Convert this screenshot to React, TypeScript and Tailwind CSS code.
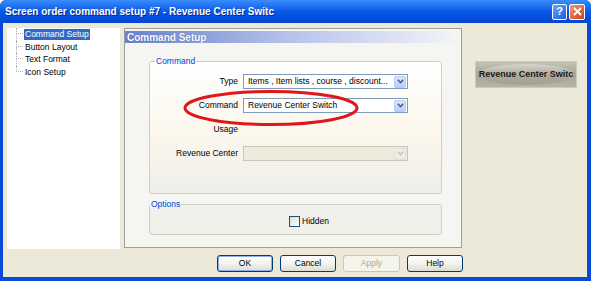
import React from "react";

const treeItems = ["Command Setup", "Button Layout", "Text Format", "Icon Setup"];

const Chevron = ({ color }: { color: string }) => (
  <svg width="7" height="5" viewBox="0 0 7 5">
    <path d="M0.8 0.8 L3.5 3.6 L6.2 0.8" fill="none" stroke={color} strokeWidth="1.6" />
  </svg>
);

const Combo = ({ text, disabled }: { text?: string; disabled?: boolean }) => (
  <div
    className={`flex h-[15px] items-center border ${
      disabled ? "border-[#c9c7ba] bg-[#ecebdc]" : "border-[#7f9db9] bg-white"
    }`}
  >
    <span className="flex-1 truncate pl-[4px] text-[8.5px] leading-none text-black">{text}</span>
    <span
      className={`mr-[1px] flex h-[12px] w-[12px] items-center justify-center rounded-[2px] border ${
        disabled
          ? "border-[#e2e0d4] bg-[#efeee6]"
          : "border-[#b9cbf3] bg-linear-to-b from-[#dce6fd] to-[#b9cdf8]"
      }`}
    >
      <Chevron color={disabled ? "#c9c7ba" : "#4d6185"} />
    </span>
  </div>
);

const XpButton = ({
  label,
  width,
  primary,
  disabled,
}: {
  label: string;
  width: string;
  primary?: boolean;
  disabled?: boolean;
}) => (
  <div
    className={`${width} flex h-[17px] items-center justify-center rounded-[3px] border text-[8.5px] ${
      disabled
        ? "border-[#c9c7ba] bg-[#f5f4ea] text-[#aca899]"
        : "border-[#003c74] bg-linear-to-b from-white via-[#f3f3ef] to-[#dedcd2] text-black"
    } ${primary ? "shadow-[inset_0_0_0_1px_#8fb2ea]" : ""}`}
  >
    {label}
  </div>
);

export default function App() {
  return (
    <div className="h-[281px] w-[591px] overflow-hidden bg-white font-['Liberation_Sans',Arial,sans-serif]">
      <div className="flex h-full flex-col rounded-t-[6px] bg-[#0a48d8]">
        {/* title bar */}
        <div className="flex h-[23px] items-center rounded-t-[6px] bg-linear-to-b from-[#3b8cfb] via-[#0758e6] to-[#0446d4] pl-[5px] pr-[6px]">
          <span className="flex-1 text-[10px] font-bold text-white [text-shadow:1px_1px_0_#0a2a8a]">
            Screen order command setup #7 - Revenue Center Switc
          </span>
          <div className="flex gap-[2px]">
            <div className="flex h-[16px] w-[15px] items-center justify-center rounded-[2px] border border-white bg-linear-to-br from-[#6aa5ff] to-[#1c5ad6] text-[11px] font-bold leading-none text-white">
              ?
            </div>
            <div className="flex h-[16px] w-[16px] items-center justify-center rounded-[2px] border border-white bg-linear-to-br from-[#ee9a78] to-[#cf3b16]">
              <svg width="9" height="9" viewBox="0 0 9 9">
                <path d="M1 1 L8 8 M8 1 L1 8" stroke="white" strokeWidth="1.8" />
              </svg>
            </div>
          </div>
        </div>

        {/* body */}
        <div className="mb-[4px] ml-[3px] mr-[4px] flex-1 bg-[#ece9d8]">
          <div className="flex pt-[5px]">
            {/* tree */}
            <div className="ml-[4px] h-[221px] w-[113px] bg-white pl-[9px]">
              {treeItems.map((item, i) => (
                <div key={item} className="flex h-[12.5px] items-center">
                  <div className="flex h-full w-[7px] flex-col">
                    <div className="h-1/2 border-b border-l border-dotted border-[#b0b0b0]" />
                    <div
                      className={`h-1/2 ${
                        i < treeItems.length - 1 ? "border-l border-dotted border-[#b0b0b0]" : ""
                      }`}
                    />
                  </div>
                  <span
                    className={`ml-[1px] flex h-[11px] items-center px-[1px] text-[8.5px] leading-none ${
                      i === 0 ? "bg-[#316ac5] text-white" : "text-black"
                    }`}
                  >
                    {item}
                  </span>
                </div>
              ))}
            </div>

            {/* settings panel */}
            <div className="ml-[4px] h-[220px] w-[338px] border border-[#9ca09c] bg-[#f5f5f1]">
              <div className="mt-[2px] flex h-[12px] w-[328px] items-center bg-linear-to-r from-[#6a80cb] via-[#b7c2ea] to-[#f2f3f7] pl-[2px] text-[10px] font-bold text-white [text-shadow:0_0_1px_#3a4f9a]">
                Command Setup
              </div>

              <fieldset className="ml-[24px] mt-[13px] h-[138px] w-[293px] rounded-[3px] border border-[#d0d0bf] bg-linear-to-b from-white via-[#fcf8ee] to-[#efeee9] px-0 pb-0 pt-[8px]">
                <legend className="ml-[5px] px-[1px] text-[8.5px] leading-[10px] text-[#0046d5]">
                  Command
                </legend>
                <div className="relative grid grid-cols-[88px_165px] items-center gap-x-[5px] gap-y-[9px] text-[8.5px] leading-none">
                  <span className="text-right">Type</span>
                  <Combo text="Items , Item lists , course , discount..." />
                  <span className="text-right">Command</span>
                  <Combo text="Revenue Center Switch" />
                  <span className="flex h-[15px] items-center justify-end">Usage</span>
                  <div className="h-[15px]" />
                  <span className="text-right">Revenue Center</span>
                  <Combo disabled />
                  <svg
                    className="pointer-events-none absolute left-[33px] top-[15px]"
                    width="178"
                    height="38"
                    viewBox="0 0 178 38"
                  >
                    <ellipse cx="88" cy="19" rx="86" ry="16.5" fill="none" stroke="#e0161e" strokeWidth="3" />
                  </svg>
                </div>
              </fieldset>

              <fieldset className="ml-[24px] mt-[5px] h-[36px] w-[293px] rounded-[3px] border border-[#d0d0bf] bg-[#f1f0eb] px-0 pb-0 pt-[7px]">
                <legend className="ml-0 px-[1px] text-[8.5px] leading-[10px] text-[#0046d5]">Options</legend>
                <div className="flex items-center pl-[139px]">
                  <span className="h-[11px] w-[11px] border border-[#1c5180] bg-linear-to-br from-[#dcdcd4] to-white" />
                  <span className="ml-[2px] text-[8.5px] leading-none">Hidden</span>
                </div>
              </fieldset>
            </div>

            {/* preview button */}
            <div className="ml-[13px] mt-[33px] h-[27px] w-[102px] border border-[#cbcabf] bg-linear-to-b from-[#c3c2b6] via-[#a6a596] to-[#b6b5a8] p-[2px]">
              <div className="flex h-full items-center justify-center rounded-[50%] bg-linear-to-b from-[#d6d5cb] via-[#aeac9e] to-[#a2a192] text-[9px] font-bold text-[#1a1a1a]">
                Revenue Center Switc
              </div>
            </div>
          </div>

          {/* dialog buttons */}
          <div className="mt-[6px] flex gap-[7px] pl-[214px]">
            <XpButton label="OK" width="w-[56px]" primary />
            <XpButton label="Cancel" width="w-[56px]" />
            <XpButton label="Apply" width="w-[57px]" disabled />
            <XpButton label="Help" width="w-[56px]" />
          </div>
        </div>
      </div>
    </div>
  );
}
